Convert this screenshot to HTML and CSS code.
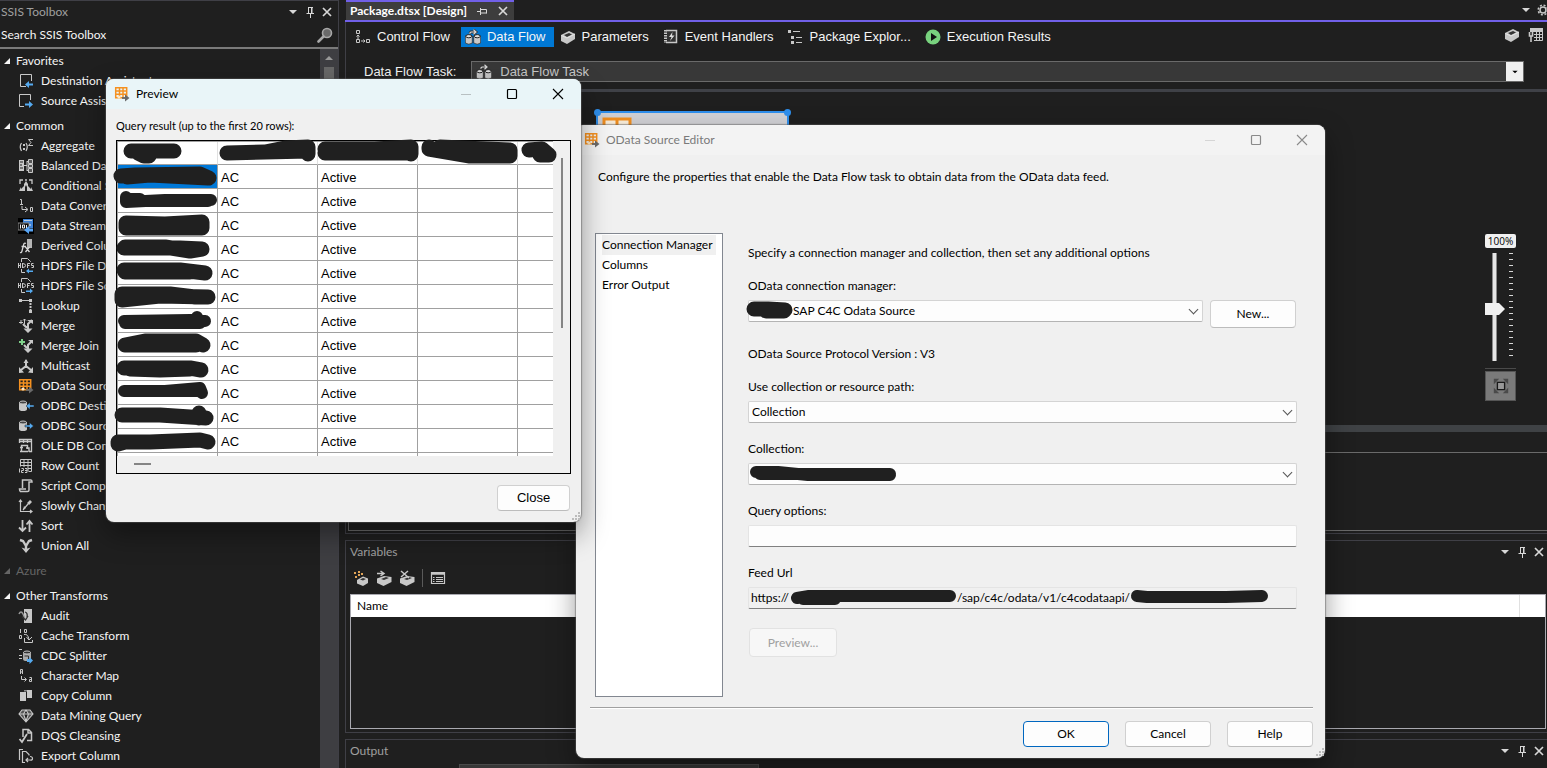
FILE: index.html
```html
<!DOCTYPE html>
<html lang="en">
<head>
  <meta charset="UTF-8">
  <title>Package.dtsx [Design]</title>
  <link rel="stylesheet" href="styles.css">
</head>
<body>

  <!-- icon sprite -->
  <svg class="sprite" aria-hidden="true">
    <symbol id="i-down" viewBox="0 0 12 12"><path d="M2 4h8L6 8z" fill="currentColor"/></symbol>
    <symbol id="i-pin" viewBox="0 0 12 12"><path d="M4 1.500h5M4.500 1v6M8 1v6M7.500 1v6M2.500 7.500h7.500M6.500 8v4" fill="none" stroke="currentColor"/></symbol>
    <symbol id="i-pinside" viewBox="0 0 12 12"><path d="M1 6.500h3M4.500 3v7M5 4.500h5.500v4M5 8h5.500" fill="none" stroke="currentColor"/></symbol>
    <symbol id="i-x" viewBox="0 0 12 12"><path d="M2 2l8 8M10 2l-8 8" fill="none" stroke="currentColor" stroke-width="1.700"/></symbol>
    <symbol id="i-search" viewBox="0 0 16 16"><circle cx="10" cy="6" r="4.500" fill="#6a6a6a" stroke="#a8a8a8" stroke-width="1.600"/><path d="M6.500 9.500L1.500 14.500" stroke="#a8a8a8" stroke-width="2.600" stroke-linecap="round"/></symbol>
    <symbol id="i-min" viewBox="0 0 12 12"><path d="M1 6.500h10" stroke="currentColor"/></symbol>
    <symbol id="i-max" viewBox="0 0 12 12"><rect x="1.500" y="1.500" width="9" height="9" rx="1" fill="none" stroke="currentColor" stroke-width="1.200"/></symbol>
    <symbol id="i-close" viewBox="0 0 12 12"><path d="M1 1l10 10M11 1L1 11" stroke="currentColor" stroke-width="1.100"/></symbol>
    <symbol id="i-grip" viewBox="0 0 10 10"><path d="M7 0h2v2H7zM7 3h2v2H7zM4 3h2v2H4zM7 6h2v2H7zM4 6h2v2H4zM1 6h2v2H1z" fill="#bcbcbc"/></symbol>

    <symbol id="i-dest" viewBox="0 0 16 16"><path d="M8 13.500H2.500v-12h11V8" fill="none" stroke="#c8c8c8"/><path d="M7 11.500l4-3.500v2.500h4v2h-4V15z" fill="#55aaf0"/></symbol>
    <symbol id="i-src" viewBox="0 0 16 16"><path d="M6 13.500H1.500v-12h11V7" fill="none" stroke="#c8c8c8"/><path d="M15 11.500L11 8v2.500H7v2h4V15z" fill="#55aaf0"/></symbol>
    <symbol id="i-aggregate" viewBox="0 0 16 16"><path d="M3.500 5Q1 8.500 3.500 13M8 5q2.500 3.500 0 8" fill="none" stroke="#c8c8c8" stroke-width="1.200"/><path d="M5 6h2v2H5zM5 10h2v2H5z" fill="#c8c8c8"/><path d="M15 1.500h-4.500l2.500 3-2.500 3H15" fill="none" stroke="#c8c8c8"/></symbol>
    <symbol id="i-balanced" viewBox="0 0 16 16"><path d="M1 2h5v11H1z" fill="#c8c8c8"/><path d="M2 4h3M2 7h2M2 10h3" stroke="#1f1f1f"/><path d="M6 7.500h3M9 3v10M9 3.500h2M9 12.500h2" fill="none" stroke="#c8c8c8"/><path d="M10.500 1.500h4v4h-4zM10.500 6.500h4v3h-4zM10.500 10.500h4v4h-4z" fill="#555" stroke="#c8c8c8"/></symbol>
    <symbol id="i-conditional" viewBox="0 0 16 16"><path d="M2 6V2h3M7 2h2M11 2h3v4" fill="none" stroke="#c8c8c8" stroke-width="1.300"/><path d="M8 3l2 3v2l3 3v-2l2 4H9V9L8 7 7 9v4H1l2-4v2l3-3V6z" fill="#c8c8c8"/></symbol>
    <symbol id="i-convert" viewBox="0 0 16 16"><path d="M2 1.500h1.500V6M2 6.500h3M4 8v3.500h5M7 9l3 2.500L7 14M12.500 9.500h2v4h-2z" fill="none" stroke="#c8c8c8"/></symbol>
    <symbol id="i-stream" viewBox="0 0 16 16"><path d="M0 0h16v16H0z" fill="#000"/><path d="M5 1h10v9H5z" fill="#3d82d6"/><path d="M6 2.500h8" stroke="#bcd" /><path d="M0 5h11v7H0z" fill="#111" stroke="#888"/><path d="M2.500 6.500v4M4.500 7h2v3h-2zM8.500 7v3M11 7h2" fill="none" stroke="#eee"/><path d="M6 12l5-4v2.500h4v3h-4V16z" fill="#58a4f4"/></symbol>
    <symbol id="i-derived" viewBox="0 0 16 16"><path d="M9 1h5v9H9z" fill="#b5b5b5"/><path d="M8 5.500Q6 4.500 5.500 7L4 13q-.5 2-2 1.500M3.500 8.500H8M7.500 9l4 5M11.500 9l-4 5" fill="none" stroke="#d8d8d8" stroke-width="1.300"/></symbol>
    <symbol id="i-hdfsd" viewBox="0 0 16 16"><path d="M3.500 4V.5h6l3 3V4M3.500 11v3.500H7" fill="none" stroke="#c8c8c8"/><path d="M.5 5v5M2.500 5v5M.5 7.500h2M4.500 5v5M4.500 5.500q3 0 3 2t-3 2M9.500 10V5.500H12M9.500 7.500h2M15.500 5.500h-2v2h2v2h-2" fill="none" stroke="#c8c8c8"/><path d="M8 13l3-2.500v2h4v1.500h-4v1.500z" fill="#55aaf0"/></symbol>
    <symbol id="i-hdfss" viewBox="0 0 16 16"><path d="M3.500 4V.5h6l3 3V4M3.500 11v3.500H7" fill="none" stroke="#c8c8c8"/><path d="M.5 5v5M2.500 5v5M.5 7.500h2M4.500 5v5M4.500 5.500q3 0 3 2t-3 2M9.500 10V5.500H12M9.500 7.500h2M15.500 5.500h-2v2h2v2h-2" fill="none" stroke="#c8c8c8"/><path d="M15 13l-3-2.500v2H8v1.500h4v1.500z" fill="#55aaf0"/></symbol>
    <symbol id="i-lookup" viewBox="0 0 16 16"><path d="M1 1h3v3H1zM11 1h3v3h-3zM11 12h3v3h-3z" fill="#c8c8c8"/><path d="M4 2.500h7" stroke="#c8c8c8"/><path d="M12.500 5v7" stroke="#c8c8c8" stroke-width="2" stroke-dasharray="2 1"/></symbol>
    <symbol id="i-merge" viewBox="0 0 16 16"><path d="M1 4.500h4M3 2v4M6.500 1v5M5 2.500l1.500-1.500L8 2.500" fill="none" stroke="#c8c8c8"/><path d="M5 6l3 3h1M14 2l-4 4v7" fill="none" stroke="#c8c8c8" stroke-width="2"/><path d="M9 2h6v4zM5.500 10.500h9L10 15z" fill="#c8c8c8"/></symbol>
    <symbol id="i-mergejoin" viewBox="0 0 16 16"><path d="M4 1v6M1 4h6" stroke="#7fd08a" stroke-width="2"/><path d="M6 7l3 3M14 3l-4 4v6" fill="none" stroke="#c8c8c8" stroke-width="2"/><path d="M10 2h5v4zM5.500 10.500h9L10 15z" fill="#c8c8c8"/></symbol>
    <symbol id="i-multicast" viewBox="0 0 16 16"><path d="M8 2v6L3 12M8 8l5 4M8 8v2" fill="none" stroke="#c8c8c8" stroke-width="2"/><path d="M5.500 5L8 1l2.500 4zM1 15V9l5 5.500zM15 15V9l-5 5.500z" fill="#c8c8c8"/></symbol>
    <symbol id="i-odata" viewBox="0 0 16 16"><path d="M1.700 1.700h11v10h-11zM2 5h11M2 8.300h11M5.500 2v9.500M9 2v9.500" fill="none" stroke="#f59120" stroke-width="1.500"/><circle cx="5" cy="11" r="1.600" fill="#ffe8c4"/><path d="M8 12h4" stroke="#6a6a6a" stroke-width="1.800"/><path d="M11 8.500l4.500 3.500-4.500 3.500z" fill="#6a6a6a"/></symbol>
    <symbol id="i-odbcd" viewBox="0 0 16 16"><path d="M1 4v7q0 2 4 2t4-2V4z" fill="#c8c8c8"/><ellipse cx="5" cy="4.500" rx="3.500" ry="1.500" fill="#444" stroke="#c8c8c8"/><path d="M8 8l4-3.500V7h4v2h-4v2.500z" fill="#55aaf0" stroke="#1f1f1f" stroke-width=".5"/></symbol>
    <symbol id="i-odbcs" viewBox="0 0 16 16"><path d="M1 4v7q0 2 4 2t4-2V4z" fill="#c8c8c8"/><ellipse cx="5" cy="4.500" rx="3.500" ry="1.500" fill="#444" stroke="#c8c8c8"/><path d="M15.500 8l-4-3.500V7H7v2h4.500v2.500z" fill="#55aaf0" stroke="#1f1f1f" stroke-width=".5"/></symbol>
    <symbol id="i-oledb" viewBox="0 0 16 16"><path d="M1.500 5V1.500h12v12H11M1 3.500h13M5.500 2v3M9.500 2v3" fill="none" stroke="#c8c8c8" stroke-width="1.300"/><path d="M3.500 14V7.500h6V11M2 9.500h3M2 13.500h8M8 10h3v4" fill="none" stroke="#c8c8c8" stroke-width="1.400"/></symbol>
    <symbol id="i-rowcount" viewBox="0 0 16 16"><path d="M2.500 8.500v-7h11v12h-3M2 4.500h12M2 7.500h12M6 1v8M10 1v12M10 10.500h4" fill="none" stroke="#c8c8c8"/><path d="M1.500 10.500v4M3.500 10.500h2v2h-2v2h2M7 10.500h2v4H7M7 12.500h2" fill="none" stroke="#c8c8c8"/></symbol>
    <symbol id="i-script" viewBox="0 0 16 16"><path d="M4.500 10V2H13q1 0 1 2h-3v8q0 1.500-1.500 1.500H2.500q-1-.5-1-2.500H8" fill="none" stroke="#c8c8c8" stroke-width="1.500"/></symbol>
    <symbol id="i-slowly" viewBox="0 0 16 16"><path d="M2.500 14V2M1 4l1.500-2L4 4M2 13.500h12M12 12l2 1.500-2 1.500M5 12l5-6" fill="none" stroke="#c8c8c8" stroke-width="1.200"/><path d="M9 5l3-3 2 2-3 3zM6 8l2 2-3 2z" fill="#c8c8c8"/></symbol>
    <symbol id="i-sort" viewBox="0 0 16 16"><path d="M4.500 2v11M1 9.500L4.500 13 8 9.500M11.500 14V3M8.500 6.500l3-3.500 3 3.500" fill="none" stroke="#c8c8c8" stroke-width="1.800"/></symbol>
    <symbol id="i-union" viewBox="0 0 16 16"><path d="M2 2l3 1 3 5 3-5 3-1M8 7v6" fill="none" stroke="#c8c8c8" stroke-width="2.400"/><path d="M3.500 9.500L8 11l4.500-1.500L8 15z" fill="#c8c8c8"/></symbol>
    <symbol id="i-audit" viewBox="0 0 16 16"><path d="M6 1h8v14H6z" fill="#c8c8c8"/><path d="M1 6q2-4 4 0t2 6" fill="none" stroke="#999" stroke-width="1.500"/><path d="M7 4q3 1 2 5M4 8.500L7.500 12 10 8" fill="none" stroke="#333" stroke-width="1.300"/></symbol>
    <symbol id="i-cache" viewBox="0 0 16 16"><path d="M2.500 1v4M6.500 1.500h2v3h-2zM1.500 7.500h2v3h-2zM6 6.500q4-1 5 5M8.500 9l2.500 3 3-3M6.500 10v4.500h8V12" fill="none" stroke="#c8c8c8"/></symbol>
    <symbol id="i-cdc" viewBox="0 0 16 16"><path d="M1 1.500h3M1 7.500h3M1 10.500h3" stroke="#c8c8c8"/><path d="M5 4v7q0 2 3.500 2t4.500-2V4z" fill="#aaa"/><ellipse cx="9" cy="4.500" rx="3.500" ry="1.500" fill="#333" stroke="#c8c8c8"/><path d="M6.500 8h4v3" fill="none" stroke="#333"/><path d="M15 12.500L11.500 9v2H9v3h2.500v2z" fill="#55aaf0"/></symbol>
    <symbol id="i-charmap" viewBox="0 0 16 16"><path d="M2.500 6V1.500h2V6M2.500 4h2M3.500 8v3.500H8M6.500 9.500l2 2-2 2M11.500 9.500h2v4h-2v-2h2" fill="none" stroke="#c8c8c8"/></symbol>
    <symbol id="i-copy" viewBox="0 0 16 16"><path d="M2 4h6v9H2zM9 2h5v8H9z" fill="#c8c8c8"/><path d="M6 2h3v1.500H6z" fill="#888"/></symbol>
    <symbol id="i-mining" viewBox="0 0 16 16"><path d="M4 2h8l3 4-7 8-7-8zM1 6h14M5.500 6L8 13l2.500-7L8 2 5.500 6" fill="#555" stroke="#c8c8c8" stroke-width="1.100"/></symbol>
    <symbol id="i-dqs" viewBox="0 0 16 16"><path d="M5 9V1.500h5.500l3 3v8H9M10 2v3h3" fill="none" stroke="#c8c8c8" stroke-width="1.500"/><path d="M1.500 11l2.500 3L9 6" fill="none" stroke="#c8c8c8" stroke-width="1.800"/></symbol>
    <symbol id="i-export" viewBox="0 0 16 16"><path d="M1.500 12V1.500H5M7 14.500H4.500v-11H8l3 3v1M12 8.500q2.500 0 2.500 2T12 12H8M10 10l-2 2 2 2" fill="none" stroke="#c8c8c8" stroke-width="1.200"/></symbol>

    <symbol id="i-control" viewBox="0 0 16 16"><path d="M1.500 1.500h3v3h-3zM1.500 10.500h3v3h-3zM11.500 10.500h3v3h-3zM3 10V6M1.500 7.500L3 6l1.500 1.500M6 12h4M8.500 10.500L10 12l-1.500 1.500" fill="none" stroke="#c8c8c8"/></symbol>
    <symbol id="i-flow" viewBox="0 0 16 16"><path d="M.3 7v7q3.500 2.500 7 0V7zM8.700 7v7q3.500 2.500 7 0V7z" fill="#c8c8c8" stroke="#222" stroke-width=".7"/><ellipse cx="3.800" cy="7.200" rx="3" ry="1.600" fill="#e0e0e0" stroke="#222"/><ellipse cx="12.200" cy="7.200" rx="3" ry="1.600" fill="#e0e0e0" stroke="#222"/><path d="M4.500 4.500L6 3H11M8.500 .8L11 3 8.500 5.200" fill="none" stroke="#333" stroke-width="2.800"/><path d="M4.500 4.500L6 3H11M8.500 .8L11 3 8.500 5.200" fill="none" stroke="#d8d8d8" stroke-width="1.200"/></symbol>
    <symbol id="i-box" viewBox="0 0 16 16"><path d="M1 6l8-4 6 3v5l-8 5-6-3z" fill="#c8c8c8"/><path d="M4 6l5-2 3 1.500-5 2.500z" fill="#333"/><path d="M1.500 6.500L7 9l8-4" fill="none" stroke="#e4e4e4"/></symbol>
    <symbol id="i-event" viewBox="0 0 16 16"><path d="M3 1.500h10.500v12H3" fill="#333" stroke="#c8c8c8" stroke-width="1.500"/><path d="M2.500 1v13" stroke="#c8c8c8" stroke-width="3" stroke-dasharray="1.500 1"/><path d="M9.500 3L6 8h2.500L7 12l4.500-5.500H9z" fill="#ddd"/></symbol>
    <symbol id="i-explorer" viewBox="0 0 16 16"><path d="M0 1h3v3H0zM3 7h3v3H3zM3 12h3v3H3z" fill="#c8c8c8"/><path d="M5 2.500h7M8 8.500h6M8 13.500h6" stroke="#c8c8c8"/></symbol>
    <symbol id="i-run" viewBox="0 0 16 16"><circle cx="8" cy="8" r="7.500" fill="#78d27e"/><path d="M6 4l6 4-6 4z" fill="#111"/></symbol>
    <symbol id="i-gear" viewBox="0 0 12 12"><circle cx="6" cy="6" r="3" fill="none" stroke="#c8c8c8" stroke-width="1.500"/><circle cx="6" cy="6" r="4.800" fill="none" stroke="#c8c8c8" stroke-width="1.500" stroke-dasharray="2 1.770"/></symbol>
    <symbol id="i-gridtool" viewBox="0 0 16 16"><path d="M2 1h13v4H2z" fill="#c8c8c8"/><path d="M6 13.500h8.500V4M6 7.500h9M6 10.500h9M8.500 5v8M11.500 5v8" fill="none" stroke="#c8c8c8"/><path d="M1.500 5v4h3V5M3 9v6" fill="none" stroke="#c8c8c8" stroke-width="1.600"/></symbol>
    <symbol id="i-addvar" viewBox="0 0 16 16"><path d="M4 10l6-3.500 5 2v4.500l-5 3-6-2.500z" fill="#c8c8c8"/><path d="M7 9.500l3-1.500L13 9l-3 1.500z" fill="#333"/><path d="M1 2h2v2H1zM5 1h2v2H5zM8 3h2v2H8zM2 6h2v2H2zM5 4h2v2H5z" fill="#e0a458"/></symbol>
    <symbol id="i-movevar" viewBox="0 0 16 16"><path d="M1 8.500l7-2.500 7.500 1v5l-8 4-6.500-3z" fill="#c8c8c8"/><path d="M5 9l5-2 3 1-5 2z" fill="#333"/><path d="M1 3.500h6M4.500 1L8 3.500 4.500 6" fill="none" stroke="#c8c8c8" stroke-width="1.500"/></symbol>
    <symbol id="i-delvar" viewBox="0 0 16 16"><path d="M1 8.500l7-2.500 7.500 1v5l-8 4-6.500-3z" fill="#c8c8c8"/><path d="M5 9l5-2 3 1-5 2z" fill="#333"/><path d="M2 1l8 7M9 1L2 7" fill="none" stroke="#c8c8c8" stroke-width="1.500"/></symbol>
    <symbol id="i-gridopts" viewBox="0 0 16 16"><path d="M1.500 2.500h13v11h-13z" fill="none" stroke="#c8c8c8" stroke-width="1.200"/><path d="M1 3.500h14" stroke="#c8c8c8" stroke-width="2.500"/><path d="M3 7.500h1.500M3 9.500h1.500M3 11.500h1.500M6 7.500h7M6 9.500h7M6 11.500h7" stroke="#c8c8c8"/></symbol>
    <symbol id="i-fit" viewBox="0 0 20 20"><path d="M2 8V2h6zM12 2h6v6zM18 12v6h-6zM8 18H2v-6z" fill="#4a4a4a"/><path d="M6 6h8v8H6z" fill="#999" stroke="#1a1a1a" stroke-width="1.500"/></symbol>
  </svg>

  <div class="ide">
    <aside class="toolbox">
      <header class="panel-head">
        <span>SSIS Toolbox</span>
        <div class="head-tools">
          <button aria-label="Window position"><svg><use href="#i-down"/></svg></button>
          <button aria-label="Auto hide"><svg><use href="#i-pin"/></svg></button>
          <button aria-label="Close"><svg><use href="#i-x"/></svg></button>
        </div>
      </header>
      <div class="search">
        <input type="text" placeholder="Search SSIS Toolbox" aria-label="Search SSIS Toolbox">
        <svg class="icon"><use href="#i-search"/></svg>
      </div>
      <div class="tree-wrap">
        <div class="tree">
          <h3>Favorites</h3>
          <ul>
            <li><svg class="icon"><use href="#i-dest"/></svg>Destination Assistant</li>
            <li><svg class="icon"><use href="#i-src"/></svg>Source Assistant</li>
          </ul>
          <h3>Common</h3>
          <ul>
            <li><svg class="icon"><use href="#i-aggregate"/></svg>Aggregate</li>
            <li><svg class="icon"><use href="#i-balanced"/></svg>Balanced Data Distributor</li>
            <li><svg class="icon"><use href="#i-conditional"/></svg>Conditional Split</li>
            <li><svg class="icon"><use href="#i-convert"/></svg>Data Conversion</li>
            <li><svg class="icon"><use href="#i-stream"/></svg>Data Streaming Destination</li>
            <li><svg class="icon"><use href="#i-derived"/></svg>Derived Column</li>
            <li><svg class="icon"><use href="#i-hdfsd"/></svg>HDFS File Destination</li>
            <li><svg class="icon"><use href="#i-hdfss"/></svg>HDFS File Source</li>
            <li><svg class="icon"><use href="#i-lookup"/></svg>Lookup</li>
            <li><svg class="icon"><use href="#i-merge"/></svg>Merge</li>
            <li><svg class="icon"><use href="#i-mergejoin"/></svg>Merge Join</li>
            <li><svg class="icon"><use href="#i-multicast"/></svg>Multicast</li>
            <li><svg class="icon"><use href="#i-odata"/></svg>OData Source</li>
            <li><svg class="icon"><use href="#i-odbcd"/></svg>ODBC Destination</li>
            <li><svg class="icon"><use href="#i-odbcs"/></svg>ODBC Source</li>
            <li><svg class="icon"><use href="#i-oledb"/></svg>OLE DB Command</li>
            <li><svg class="icon"><use href="#i-rowcount"/></svg>Row Count</li>
            <li><svg class="icon"><use href="#i-script"/></svg>Script Component</li>
            <li><svg class="icon"><use href="#i-slowly"/></svg>Slowly Changing Dimension</li>
            <li><svg class="icon"><use href="#i-sort"/></svg>Sort</li>
            <li><svg class="icon"><use href="#i-union"/></svg>Union All</li>
          </ul>
          <h3 class="disabled">Azure</h3>
          <h3>Other Transforms</h3>
          <ul>
            <li><svg class="icon"><use href="#i-audit"/></svg>Audit</li>
            <li><svg class="icon"><use href="#i-cache"/></svg>Cache Transform</li>
            <li><svg class="icon"><use href="#i-cdc"/></svg>CDC Splitter</li>
            <li><svg class="icon"><use href="#i-charmap"/></svg>Character Map</li>
            <li><svg class="icon"><use href="#i-copy"/></svg>Copy Column</li>
            <li><svg class="icon"><use href="#i-mining"/></svg>Data Mining Query</li>
            <li><svg class="icon"><use href="#i-dqs"/></svg>DQS Cleansing</li>
            <li><svg class="icon"><use href="#i-export"/></svg>Export Column</li>
          </ul>
        </div>
        <div class="scrollbar"><i></i><b></b></div>
      </div>
    </aside>

    <main class="editor">
      <div class="doc-tabs">
        <div class="doc-tab">
          <span>Package.dtsx [Design]</span>
          <button aria-label="Pin tab"><svg><use href="#i-pinside"/></svg></button>
          <button aria-label="Close tab"><svg><use href="#i-x"/></svg></button>
        </div>
        <div class="doc-tools">
          <button aria-label="Active files"><svg><use href="#i-down"/></svg></button>
          <button aria-label="Settings"><svg><use href="#i-gear"/></svg></button>
        </div>
      </div>

      <div class="designer">
        <nav class="views">
          <button><svg class="icon"><use href="#i-control"/></svg>Control Flow</button>
          <button class="active"><svg class="icon"><use href="#i-flow"/></svg>Data Flow</button>
          <button><svg class="icon"><use href="#i-box"/></svg>Parameters</button>
          <button><svg class="icon"><use href="#i-event"/></svg>Event Handlers</button>
          <button><svg class="icon"><use href="#i-explorer"/></svg>Package Explor...</button>
          <button><svg class="icon"><use href="#i-run"/></svg>Execution Results</button>
          <div class="views-right">
            <svg class="icon"><use href="#i-box"/></svg>
            <svg class="icon"><use href="#i-gridtool"/></svg>
          </div>
        </nav>
        <div class="task-row">
          <label for="task">Data Flow Task:</label>
          <div class="task-select">
            <svg class="icon"><use href="#i-flow"/></svg>
            <select id="task"><option>Data Flow Task</option></select>
            <span class="task-arrow"><svg><use href="#i-down"/></svg></span>
          </div>
        </div>
        <div class="canvas">
          <div class="node">
            <svg width="30" height="30" viewBox="0 0 30 30"><path d="M2 2h26v26H2zM2 10h26M2 19h26M15 2v26" fill="#fff3df" stroke="#f59120" stroke-width="3"/></svg>
          </div>
          <div class="zoom">
            <output for="zoom">100%</output>
            <div class="zoom-track">
              <input type="range" id="zoom" min="0" max="100" value="48" aria-label="Zoom">
              <div class="ticks"></div>
            </div>
            <button aria-label="Fit to window"><svg><use href="#i-fit"/></svg></button>
          </div>
        </div>
        <div class="splitter"></div>
        <div class="connections"><div></div></div>
      </div>

      <section class="panel variables">
        <header class="panel-head">
          <span>Variables</span>
          <div class="head-tools">
            <button aria-label="Window position"><svg><use href="#i-down"/></svg></button>
            <button aria-label="Auto hide"><svg><use href="#i-pin"/></svg></button>
            <button aria-label="Close"><svg><use href="#i-x"/></svg></button>
          </div>
        </header>
        <div class="var-tools">
          <button aria-label="Add variable"><svg class="icon"><use href="#i-addvar"/></svg></button>
          <button aria-label="Move variable"><svg class="icon"><use href="#i-movevar"/></svg></button>
          <button aria-label="Delete variable"><svg class="icon"><use href="#i-delvar"/></svg></button>
          <span class="sep"></span>
          <button aria-label="Grid options"><svg class="icon"><use href="#i-gridopts"/></svg></button>
        </div>
        <div class="var-grid">
          <table>
            <tr><th>Name</th><th class="last"></th></tr>
          </table>
        </div>
      </section>

      <section class="panel output">
        <header class="panel-head">
          <span>Output</span>
          <div class="head-tools">
            <button aria-label="Window position"><svg><use href="#i-down"/></svg></button>
            <button aria-label="Auto hide"><svg><use href="#i-pin"/></svg></button>
            <button aria-label="Close"><svg><use href="#i-x"/></svg></button>
          </div>
        </header>
        <div class="output-tools"><select aria-label="Output source"></select></div>
      </section>
    </main>
  </div>

  <!-- OData Source Editor window -->
  <div class="window odata">
    <div class="titlebar">
      <svg class="icon"><use href="#i-odata"/></svg>
      <span>OData Source Editor</span>
      <div class="caption">
        <button aria-label="Minimize" disabled><svg><use href="#i-min"/></svg></button>
        <button aria-label="Maximize"><svg><use href="#i-max"/></svg></button>
        <button aria-label="Close"><svg><use href="#i-close"/></svg></button>
      </div>
    </div>
    <p class="intro">Configure the properties that enable the Data Flow task to obtain data from the OData data feed.</p>
    <div class="odata-body">
      <ul class="pages">
        <li class="selected">Connection Manager</li>
        <li>Columns</li>
        <li>Error Output</li>
      </ul>
      <form class="settings">
        <p class="hint">Specify a connection manager and collection, then set any additional options</p>
        <div class="field">
          <label for="manager">OData connection manager:</label>
          <div class="manager-row">
            <div class="combo">
              <select id="manager" class="masked"><option>SAP C4C Odata Source</option></select>
              <svg class="ink" viewBox="0 0 455 22"><path d="M6 9L20 9 37 10M18 11H36"/></svg>
            </div>
            <button type="button">New...</button>
          </div>
        </div>
        <p class="version">OData Source Protocol Version : V3</p>
        <div class="field">
          <label for="path">Use collection or resource path:</label>
          <div class="combo"><select id="path"><option>Collection</option></select></div>
        </div>
        <div class="field">
          <label for="collection">Collection:</label>
          <div class="combo">
            <select id="collection"></select>
            <svg class="ink thin" viewBox="0 0 549 22"><path d="M8 9L30 9 60 12 142 12M12 11L40 11 142 11"/></svg>
          </div>
        </div>
        <div class="field">
          <label for="query">Query options:</label>
          <input type="text" id="query">
        </div>
        <div class="field">
          <label for="feed">Feed Url</label>
          <div class="url" id="feed">
            <span>https://</span>
            <svg class="ink-inline" width="168" height="20" viewBox="0 0 168 20"><path d="M8 10L20 8 60 8 161 8M14 11H46"/></svg>
            <span>/sap/c4c/odata/v1/c4codataapi/</span>
            <svg class="ink-inline" width="140" height="20" viewBox="0 0 140 20"><path d="M7 8L17 9 96 9 132 8"/></svg>
          </div>
        </div>
        <button type="button" class="preview-btn" disabled>Preview...</button>
      </form>
    </div>
    <div class="actions">
      <button class="primary">OK</button>
      <button>Cancel</button>
      <button>Help</button>
    </div>
    <svg class="grip"><use href="#i-grip"/></svg>
  </div>

  <!-- Preview window -->
  <div class="window preview">
    <div class="titlebar">
      <svg class="icon"><use href="#i-odata"/></svg>
      <span>Preview</span>
      <div class="caption">
        <button aria-label="Minimize" disabled><svg><use href="#i-min"/></svg></button>
        <button aria-label="Maximize"><svg><use href="#i-max"/></svg></button>
        <button aria-label="Close"><svg><use href="#i-close"/></svg></button>
      </div>
    </div>
    <p class="result-label">Query result (up to the first 20 rows):</p>
    <div class="grid">
      <div class="grid-view">
        <table>
          <tr><th></th><th></th><th></th><th></th><th></th></tr>
          <tr><td class="current"></td><td>AC</td><td>Active</td><td></td><td></td></tr>
          <tr><td></td><td>AC</td><td>Active</td><td></td><td></td></tr>
          <tr><td></td><td>AC</td><td>Active</td><td></td><td></td></tr>
          <tr><td></td><td>AC</td><td>Active</td><td></td><td></td></tr>
          <tr><td></td><td>AC</td><td>Active</td><td></td><td></td></tr>
          <tr><td></td><td>AC</td><td>Active</td><td></td><td></td></tr>
          <tr><td></td><td>AC</td><td>Active</td><td></td><td></td></tr>
          <tr><td></td><td>AC</td><td>Active</td><td></td><td></td></tr>
          <tr><td></td><td>AC</td><td>Active</td><td></td><td></td></tr>
          <tr><td></td><td>AC</td><td>Active</td><td></td><td></td></tr>
          <tr><td></td><td>AC</td><td>Active</td><td></td><td></td></tr>
          <tr><td></td><td>AC</td><td>Active</td><td></td><td></td></tr>
          <tr><td></td><td></td><td></td><td></td><td></td></tr>
        </table>
      </div>
      <div class="vbar"><i></i></div>
      <div class="hbar"><i></i></div>
    </div>
    <div class="preview-actions"><button>Close</button></div>
    <svg class="grip"><use href="#i-grip"/></svg>
    <!-- marker strokes over the headers and the first column -->
    <svg class="ink" viewBox="106 79 475 443">
      <path d="M131 151H174M138 153L144 156H149"/>
      <path d="M227 153L308 151M227 153L265 152 285 148 308 147V154"/>
      <path d="M325 153H411M325 149H345L375 149 411 147V154"/>
      <path d="M429 147V149L470 156H510V150L440 147"/>
      <path d="M529 150L542 149 549 155 540 155"/>
      <path d="M121 176L135 175 200 174 209 178M127 177L150 175 208 178"/>
      <path class="thin" d="M126 197V202L165 200 211 200M128 199H140M150 201H208"/>
      <path d="M126 223V228H202V222L165 224Z"/>
      <path d="M124 248H180L202 249 190 251 165 247H125"/>
      <path d="M124 270L180 270 205 273M125 272H190"/>
      <path d="M122 294V300L160 296 208 297M122 294H170L195 297"/>
      <path class="thin" d="M124 321L190 320 205 321M125 323H200M197 317V322"/>
      <path d="M125 345L145 341 196 341 203 345M125 345L160 345H196"/>
      <path d="M124 368L190 368 201 370M130 369L160 370 190 369"/>
      <path class="thin" d="M124 391L165 391 200 388 202 393M124 391L165 391H200"/>
      <path d="M122 415L160 415 190 417 206 418M199 413V418"/>
      <path d="M118 442H122L150 442 200 440 208 442M118 444L125 442"/>
    </svg>
  </div>

</body>
</html>
```
FILE: styles.css
```css
* {
  box-sizing: border-box;
}

body {
  margin: 0;
  height: 100vh;
  position: relative;
  overflow: hidden;
  background: #1f1f1f;
  color: #f5f5f5;
  font-family: "Segoe UI", Lato, sans-serif;
  font-size: 12px;
  line-height: 20px;
}

button, input, select {
  font: inherit;
  color: inherit;
  margin: 0;
}

ul, p, h3 {
  margin: 0;
  padding: 0;
  list-style: none;
  font-size: 12px;
  font-weight: normal;
}

.sprite {
  position: absolute;
  width: 0;
  height: 0;
}

.icon {
  width: 16px;
  height: 16px;
  flex: none;
}

/* ide layout */
.ide {
  display: flex;
  gap: 6px;
  height: 100%;
}

.toolbox {
  width: 339px;
  flex: none;
  display: flex;
  flex-direction: column;
  border-top: 1px solid #3f3f46;
  border-right: 1px solid #3f3f46;
}

.panel-head {
  display: flex;
  justify-content: space-between;
  align-items: center;
  height: 21px;
  padding: 0 5px 0 1px;
  color: #a0a0a0;
}

.head-tools {
  display: flex;
  gap: 5px;
}

.head-tools button,
.doc-tabs button {
  width: 12px;
  height: 12px;
  padding: 0;
  border: none;
  background: none;
  color: #d8d8d8;
}

.head-tools svg,
.doc-tabs svg {
  display: block;
  width: 12px;
  height: 12px;
}

.search {
  display: flex;
  align-items: center;
  height: 27px;
  padding-right: 5px;
  border-bottom: 2px solid #7a7a7a;
}

.search input {
  flex: 1;
  padding: 0 1px;
  border: none;
  outline: none;
  background: none;
}

.search input::placeholder {
  color: #f5f5f5;
}

.tree-wrap {
  flex: 1;
  min-height: 0;
  display: flex;
}

.tree {
  flex: 1;
  overflow: hidden;
  white-space: nowrap;
  padding-top: 2px;
}

.tree h3 {
  display: flex;
  align-items: center;
  gap: 6px;
  height: 20px;
  padding-left: 4px;
}

.tree h3::before {
  content: "";
  width: 6px;
  height: 6px;
  background: currentColor;
  clip-path: polygon(100% 0, 100% 100%, 0 100%);
}

.tree h3.disabled {
  color: #656565;
}

.tree ul + h3,
.tree h3 + h3 {
  margin-top: 5px;
}

.tree li {
  display: flex;
  align-items: center;
  gap: 7px;
  height: 20px;
  padding-left: 18px;
}

.scrollbar {
  width: 18px;
  display: flex;
  flex-direction: column;
  align-items: center;
  gap: 7px;
  padding-top: 7px;
  background: #3e3e42;
}

.scrollbar i {
  border: 4px solid transparent;
  border-top: none;
  border-bottom: 4px solid #999;
}

.scrollbar b {
  width: 10px;
  height: 300px;
  background: #686868;
}

/* editor */
.editor {
  flex: 1;
  min-width: 0;
  display: flex;
  flex-direction: column;
  gap: 6px;
}

.doc-tabs {
  display: flex;
  justify-content: space-between;
  height: 22px;
  margin-bottom: -6px;
  padding-left: 1px;
  border-bottom: 2px solid #7160e8;
}

.doc-tab {
  display: flex;
  align-items: center;
  gap: 9px;
  padding: 0 5px 0 4px;
  border-top: 2px solid #7160e8;
  background: #3d3d3d;
  color: #fff;
  font-weight: bold;
}

.doc-tools {
  display: flex;
  align-items: center;
  gap: 5px;
  margin-right: -2px;
}

.designer {
  flex: 1;
  min-height: 0;
  display: flex;
  flex-direction: column;
  border-left: 1px solid #3f3f46;
  border-bottom: 1px solid #3f3f46;
}

.views {
  display: flex;
  align-items: center;
  gap: 2px;
  height: 30px;
  padding-left: 5px;
  font-family: "Liberation Sans", sans-serif;
  font-size: 13px;
}

.views button {
  display: flex;
  align-items: center;
  gap: 6px;
  height: 20px;
  padding: 0 8px 0 4px;
  border: none;
  background: none;
}

.views button.active {
  margin-left: 1px;
  background: #0078d4;
}

.views-right {
  display: flex;
  gap: 8px;
  margin-left: auto;
  padding: 0 3px 4px 0;
}

.task-row {
  display: flex;
  align-items: center;
  gap: 15px;
  padding: 9px 23px 7px 18px;
  border-bottom: 3px solid #3f4147;
  font-family: "Liberation Sans", sans-serif;
  font-size: 13px;
}

.task-select {
  flex: 1;
  position: relative;
}

.task-select select {
  display: block;
  width: 100%;
  height: 21px;
  padding: 0 28px;
  border: 1px solid #6a6a6a;
  border-radius: 0;
  appearance: none;
  background: #383838;
  color: #c8c8c8;
}

.task-select .icon {
  position: absolute;
  left: 5px;
  top: 3px;
}

.task-arrow {
  position: absolute;
  top: 1px;
  right: 1px;
  bottom: 1px;
  width: 17px;
  display: grid;
  place-items: center;
  background: #f0f0f0;
  color: #000;
  pointer-events: none;
}

.task-arrow svg {
  width: 8px;
  height: 8px;
}

.canvas {
  flex: 1;
  position: relative;
}

.node {
  position: absolute;
  left: 250px;
  top: 19px;
  width: 193px;
  height: 44px;
  padding: 4px;
  border: 2px solid #2f8fec;
  border-radius: 4px;
  background: #d2d2d6;
}

.node::before,
.node::after {
  content: "";
  position: absolute;
  top: -4px;
  width: 7px;
  height: 7px;
  border-radius: 50%;
  background: #2f8fec;
}

.node::before {
  left: -4px;
}

.node::after {
  right: -4px;
}

.zoom {
  position: absolute;
  right: 31px;
  top: 142px;
  width: 31px;
}

.zoom output {
  display: block;
  border-radius: 2px;
  background: #f0f0f0;
  color: #000;
  font-family: "Open Sans", sans-serif;
  font-size: 10px;
  line-height: 14px;
  text-align: center;
}

.zoom-track {
  display: flex;
  gap: 4px;
  padding: 5px 0 7px;
  border-bottom: 1px solid #4a4a4a;
}

.zoom input {
  appearance: none;
  writing-mode: vertical-lr;
  direction: rtl;
  width: 20px;
  height: 108px;
  background: linear-gradient(90deg, #8a8a8a 1px, #e6e6e6 1px, #e6e6e6 4px, #8a8a8a 4px) 7px 0 / 5px 100% no-repeat;
}

.zoom input::-webkit-slider-thumb {
  appearance: none;
  width: 20px;
  height: 12px;
  background: #f0f0f0;
  clip-path: polygon(0 0, 70% 0, 100% 50%, 70% 100%, 0 100%);
}

.ticks {
  width: 4px;
  height: 108px;
  background: repeating-linear-gradient(#d8d8d8 0 1px, transparent 1px 6px);
}

.zoom button {
  display: grid;
  place-items: center;
  width: 31px;
  height: 30px;
  margin-top: 2px;
  padding: 0;
  border: 1px solid #555;
  background: #7a7a7a;
}

.zoom button svg {
  width: 18px;
  height: 18px;
}

.splitter {
  height: 7px;
  background: #3f4245;
}

.connections {
  padding: 20px 0 2px 2px;
}

.connections div {
  height: 79px;
  border: 1px solid #6a6a6a;
  border-right: none;
}

.panel {
  border: 1px solid #3f3f46;
  border-right: none;
}

.panel .panel-head {
  padding: 0 2px 0 4px;
}

.variables {
  height: 193px;
  display: flex;
  flex-direction: column;
}

.var-tools {
  display: flex;
  align-items: center;
  gap: 7px;
  height: 32px;
  padding-left: 7px;
}

.var-tools button {
  display: flex;
  padding: 0;
  border: none;
  background: none;
}

.var-tools .sep {
  width: 1px;
  height: 18px;
  background: #5a5a5a;
}

.var-grid {
  flex: 1;
  margin: 0 1px 3px 4px;
  border: 1px solid #a9a9b0;
}

.var-grid table {
  width: 100%;
  border-collapse: collapse;
}

.var-grid th {
  height: 22px;
  padding: 0 6px;
  background: #fff;
  color: #000;
  font-weight: normal;
  text-align: left;
}

.var-grid .last {
  width: 26px;
  border-left: 1px solid #e0e0e0;
}

.output {
  height: 29px;
  border-bottom: none;
  overflow: hidden;
}

.output-tools {
  padding: 3px 0 0 113px;
}

.output-tools select {
  display: block;
  width: 300px;
  height: 22px;
  border: 1px solid #4a4a4a;
  appearance: none;
  background: #383838;
}

/* windows */
.window {
  position: absolute;
  display: flex;
  flex-direction: column;
  border-radius: 8px;
  background: #f0f0f0;
  color: #000;
  box-shadow: 0 0 1px 1px rgba(90, 90, 90, 0.5), 0 12px 28px rgba(0, 0, 0, 0.4);
}

.titlebar {
  display: flex;
  align-items: center;
  gap: 6px;
  height: 30px;
  padding: 0 14px 0 8px;
  border-radius: 8px 8px 0 0;
}

.caption {
  display: flex;
  gap: 34px;
  margin-left: auto;
  padding-right: 3px;
}

.caption button {
  width: 12px;
  height: 12px;
  padding: 0;
  border: none;
  background: none;
}

.caption button:disabled {
  color: #b8c0c2;
}

.caption svg {
  display: block;
  width: 12px;
  height: 12px;
}

.window .grip {
  position: absolute;
  right: 0;
  bottom: 0;
  width: 10px;
  height: 10px;
}

.window button {
  color: inherit;
}

.actions button,
.manager-row button,
.preview-btn,
.preview-actions button {
  height: 26px;
  border: 1px solid #d0d0d0;
  border-bottom-color: #bcbcbc;
  border-radius: 4px;
  background: #fdfdfd;
}

.ink {
  position: absolute;
  left: 0;
  top: 0;
  width: 100%;
  height: 100%;
  overflow: visible;
  pointer-events: none;
}

.ink path,
.ink-inline path {
  fill: none;
  stroke: #202020;
  stroke-width: 15px;
  stroke-linecap: round;
  stroke-linejoin: round;
}

.ink.thin path,
.ink path.thin,
.ink-inline path {
  stroke-width: 12px;
}

.odata {
  left: 576px;
  top: 125px;
  width: 749px;
}

.odata .titlebar {
  background: #f3f3f3;
  color: #7a7a7a;
}

.odata .caption button {
  color: #8a8a8a;
}

.odata .caption button:disabled {
  color: #d5d5d5;
}

.intro {
  padding: 12px 22px 46px;
}

.odata-body {
  display: flex;
  gap: 25px;
  padding: 0 28px 0 19px;
}

.pages {
  width: 128px;
  flex: none;
  padding: 1px 6px;
  border: 1px solid #828790;
  background: #fff;
  white-space: nowrap;
}

.pages .selected {
  background: #f0f0f0;
}

.settings {
  flex: 1;
  padding: 10px 0 40px;
}

.hint {
  margin-bottom: 13px;
}

.field {
  margin-bottom: 16px;
}

.field label {
  display: block;
  margin-bottom: 4px;
}

.manager-row {
  display: flex;
  align-items: flex-start;
  gap: 7px;
  padding-right: 1px;
}

.manager-row button {
  width: 86px;
  height: 28px;
}

.combo {
  flex: 1;
  position: relative;
}

.combo::after {
  content: "";
  position: absolute;
  right: 6px;
  top: 6px;
  width: 6px;
  height: 6px;
  border: solid #555;
  border-width: 0 1px 1px 0;
  transform: rotate(45deg);
}

.combo select,
.field input,
.url {
  display: block;
  width: 100%;
  height: 22px;
  padding: 0 3px;
  border: 1px solid #d4d4d4;
  border-bottom-color: #b4b4b4;
  border-radius: 2px;
  appearance: none;
  background: #fdfdfd;
}

.combo select.masked {
  padding-left: 44px;
}

.field input {
  border-color: #e4e4e4;
  border-bottom-color: #808080;
}

.url {
  display: flex;
  padding: 0 2px;
  border-color: #e4e4e4;
  border-bottom-color: #808080;
  background: #f0f0f0;
  line-height: 20px;
}

.version {
  margin-bottom: 13px;
}

.preview-btn {
  width: 88px;
  height: 29px;
  margin: 3px 1px 0;
}

.window .preview-btn {
  color: #a0a0a0;
  border-color: #e2e2e2;
  background: #f7f7f7;
}

.actions {
  display: flex;
  justify-content: flex-end;
  gap: 16px;
  margin: 10px 12px 0 14px;
  padding: 13px 0 11px;
  border-top: 1px solid #a0a0a0;
  box-shadow: inset 0 1px #fff;
}

.actions button {
  width: 86px;
}

.actions .primary {
  border-color: #0067c0;
}

.preview {
  left: 106px;
  top: 79px;
  width: 475px;
}

.preview .titlebar {
  background: #e9f5f8;
}

.result-label {
  padding: 7px 10px 4px;
  font-size: 11px;
}

.grid {
  display: grid;
  grid-template-columns: 1fr 17px;
  margin: 0 10px;
  border: 1px solid #000;
}

.grid-view {
  height: 315px;
  overflow: hidden;
  background: #fff;
}

.grid table {
  width: 501px;
  table-layout: fixed;
  border-collapse: separate;
  border-spacing: 0;
  border-top: 1px solid #a0a0a0;
  border-left: 1px solid #a0a0a0;
  font-family: "Liberation Sans", sans-serif;
}

.grid td,
.grid th {
  height: 24px;
  padding: 2px 3px 0;
  border-right: 1px solid #a0a0a0;
  border-bottom: 1px solid #a0a0a0;
  font-size: 13px;
  line-height: 16px;
}

.grid th {
  height: 23px;
  border-right-color: #e0e0e0;
}

.grid td.current {
  background: #0078d7;
}

.vbar {
  padding: 17px 7px 0 8px;
}

.vbar i {
  display: block;
  width: 2px;
  height: 170px;
  background: #858585;
}

.hbar {
  grid-column: 1 / 3;
  height: 17px;
  padding: 7px 17px 0;
}

.hbar i {
  display: block;
  width: 17px;
  height: 2px;
  background: #858585;
}

.preview-actions {
  display: flex;
  justify-content: flex-end;
  padding: 11px;
  font-family: "Liberation Sans", sans-serif;
}

.preview-actions button {
  width: 73px;
  font-size: 13px;
}
```
